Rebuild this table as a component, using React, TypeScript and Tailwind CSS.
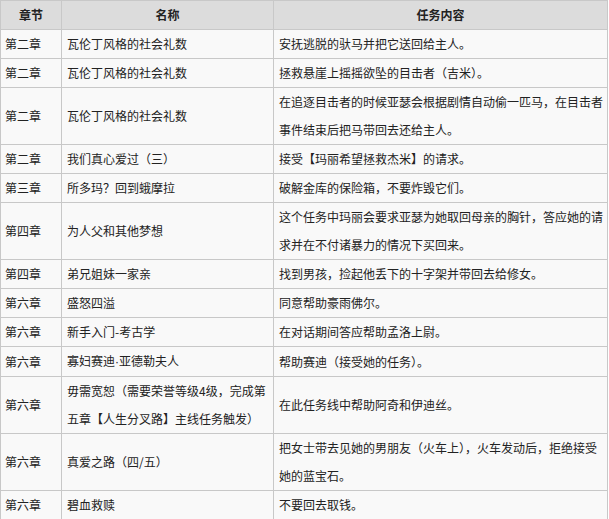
const rows: { ch: string; name: React.ReactNode; task: React.ReactNode }[] = [
  { ch: "第二章", name: "瓦伦丁风格的社会礼数", task: "安抚逃脱的驮马并把它送回给主人。" },
  { ch: "第二章", name: "瓦伦丁风格的社会礼数", task: "拯救悬崖上摇摇欲坠的目击者（吉米）。" },
  {
    ch: "第二章",
    name: "瓦伦丁风格的社会礼数",
    task: (
      <>
        在追逐目击者的时候亚瑟会根据剧情自动偷一匹马，在目击者
        <br />
        事件结束后把马带回去还给主人。
      </>
    ),
  },
  { ch: "第二章", name: "我们真心爱过（三）", task: "接受【玛丽希望拯救杰米】的请求。" },
  { ch: "第三章", name: "所多玛？回到蛾摩拉", task: "破解金库的保险箱，不要炸毁它们。" },
  {
    ch: "第四章",
    name: "为人父和其他梦想",
    task: (
      <>
        这个任务中玛丽会要求亚瑟为她取回母亲的胸针，答应她的请
        <br />
        求并在不付诸暴力的情况下买回来。
      </>
    ),
  },
  { ch: "第四章", name: "弟兄姐妹一家亲", task: "找到男孩，捡起他丢下的十字架并带回去给修女。" },
  { ch: "第六章", name: "盛怒四溢", task: "同意帮助豪雨佛尔。" },
  { ch: "第六章", name: "新手入门-考古学", task: "在对话期间答应帮助孟洛上尉。" },
  {
    ch: "第六章",
    name: (
      <>
        寡妇赛迪<span className="font-['Liberation_Sans',sans-serif]">·</span>亚德勒夫人
      </>
    ),
    task: "帮助赛迪（接受她的任务）。",
  },
  {
    ch: "第六章",
    name: (
      <>
        毋需宽恕（需要荣誉等级4级，完成第
        <br />
        五章【人生分叉路】主线任务触发）
      </>
    ),
    task: "在此任务线中帮助阿奇和伊迪丝。",
  },
  {
    ch: "第六章",
    name: "真爱之路（四/五）",
    task: (
      <>
        把女士带去见她的男朋友（火车上），火车发动后，拒绝接受
        <br />
        她的蓝宝石。
      </>
    ),
  },
  { ch: "第六章", name: "碧血救赎", task: "不要回去取钱。" },
];

export default function App() {
  return (
    <div className="min-h-screen bg-white font-['Noto_Sans_CJK_SC','Noto_Sans',sans-serif] text-[12px] text-[#222]">
      <table className="table-fixed border-collapse w-[607px] bg-[#f9f9f9]">
        <colgroup>
          <col className="w-[61px]" />
          <col className="w-[212px]" />
          <col className="w-[334px]" />
        </colgroup>
        <thead>
          <tr className="bg-[#dcdcdc]">
            <th className="border border-[#c8c8c8] px-1 leading-[28px] font-bold text-center">章节</th>
            <th className="border border-[#c8c8c8] px-1 leading-[28px] font-bold text-center">名称</th>
            <th className="border border-[#c8c8c8] px-1 leading-[28px] font-bold text-center">任务内容</th>
          </tr>
        </thead>
        <tbody>
          {rows.map((r, i) => (
            <tr key={i}>
              <td className="border border-[#c8c8c8] px-1 py-0 leading-[28px] align-middle whitespace-nowrap">{r.ch}</td>
              <td className="border border-[#c8c8c8] pl-[5px] pr-1 py-0 leading-[28px] align-middle whitespace-nowrap">{r.name}</td>
              <td className="border border-[#c8c8c8] pl-[5px] pr-1 py-0 leading-[28px] align-middle whitespace-nowrap">{r.task}</td>
            </tr>
          ))}
        </tbody>
      </table>
    </div>
  );
}
